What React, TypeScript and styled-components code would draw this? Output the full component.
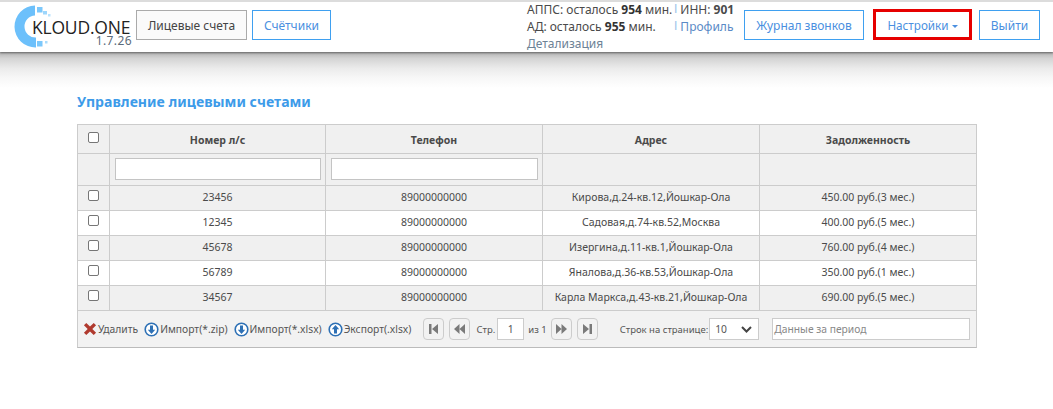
import React from "react";
import styled, { createGlobalStyle } from "styled-components";

const Global = createGlobalStyle`
  html, body { margin: 0; padding: 0; background: #fff; }
  body { font-family: "Noto Sans", "Open Sans", "Liberation Sans", sans-serif; font-size: 12px; color: #4a4a4a; }
`;

const Page = styled.div`
  width: 1053px;
  height: 409px;
  overflow: hidden;
`;

const Header = styled.header`
  height: 52px;
  box-sizing: border-box;
  border-top: 2px solid #dcdcdc;
  background: #fff;
  display: flex;
  align-items: flex-start;
  padding-left: 14px;
  box-shadow: 0 1px 2px rgba(0, 0, 0, 0.45);
  position: relative;
`;

const Shade = styled.div`
  height: 36px;
  background: linear-gradient(to bottom, #b2b2b2 0, #d4d4d4 18%, #ebebeb 45%, #f7f7f7 72%, #fff 100%);
`;

const LogoBox = styled.div`
  width: 118px;
  height: 46px;
  flex: none;
  position: relative;
  margin-top: 3px;
`;

const LogoName = styled.span`
  position: absolute;
  left: 18px;
  top: 14px;
  font-family: "Open Sans", sans-serif;
  font-size: 17.5px;
  line-height: 16px;
  color: #222;
  letter-spacing: -0.2px;
`;

const LogoVersion = styled.span`
  position: absolute;
  right: 0;
  top: 31px;
  font-size: 12px;
  line-height: 10px;
  color: #5b6b7a;
  letter-spacing: 0.4px;
`;

const Button = styled.button<{ $active?: boolean; $width: number }>`
  box-sizing: border-box;
  height: 30px;
  width: ${(p) => p.$width}px;
  flex: none;
  padding: 0;
  font: inherit;
  font-size: 12px;
  background: ${(p) => (p.$active ? "#fafafa" : "#fff")};
  color: ${(p) => (p.$active ? "#444" : "#4a8fe0")};
  border: 1px solid ${(p) => (p.$active ? "#aaa" : "#3fa0f0")};
`;

const NavGroup = styled.div`
  display: flex;
  gap: 5px;
  margin: 8px 0 0 4px;
`;

const Info = styled.div`
  width: 217px;
  margin-left: 196px;
  flex: none;
  font-size: 12px;
  line-height: 17px;
  margin-top: -1px;
  white-space: nowrap;
`;

const InfoRow = styled.div`
  display: flex;
`;

const InfoLeft = styled.span`
  width: 147px;
  flex: none;
  & b { color: #333; }
`;

const InfoLink = styled.span<{ $muted?: boolean }>`
  color: ${(p) => (p.$muted ? "#6d8296" : "#5a8ac6")};
`;

const Sep = styled.span`
  font-family: "Liberation Sans", sans-serif;
  color: #9cc4ea;
  margin-right: 3px;
`;

const RightGroup = styled.div`
  display: flex;
  align-items: flex-start;
  margin: 8px 0 0 0;
`;

const Highlight = styled.div`
  box-sizing: border-box;
  width: 99px;
  height: 31px;
  margin: -1px 7px 0 9px;
  border: 3px solid #e60000;
  font-size: 11.7px;
  color: #4a8fe0;
  display: flex;
  align-items: center;
  justify-content: center;
  gap: 3px;
`;

const Caret = styled.i`
  display: inline-block;
  margin-top: 3px;
  border-left: 3.5px solid transparent;
  border-right: 3.5px solid transparent;
  border-top: 3.5px solid #4a8fe0;
`;

const Content = styled.main`
  padding: 4px 77px 0;
`;

const Title = styled.h1`
  margin: 0 0 12px;
  font-size: 14.1px;
  line-height: 20px;
  font-weight: 700;
  color: #3d9be9;
`;

const Grid = styled.table`
  width: 899px;
  border-collapse: collapse;
  table-layout: fixed;
  font-size: 10.5px;
  & td, & th { border: 1px solid #ccc; padding: 0; text-align: center; }
`;

const HeadRow = styled.tr`
  height: 29px;
  background: #f0f0f0;
  & th { padding-top: 1px; font-size: 10.5px; font-weight: 700; color: #4a4a4a; }
`;

const FilterRow = styled.tr`
  height: 32px;
  background: #f0f0f0;
`;

const BodyRow = styled.tr<{ $odd: boolean }>`
  height: 25px;
  background: ${(p) => (p.$odd ? "#f0f0f0" : "#fff")};
  & td { padding-bottom: 2px; }
`;

const Check = styled.span`
  display: block;
  box-sizing: border-box;
  width: 11px;
  height: 11px;
  margin: -4px auto 0;
  background: #fff;
  border: 1px solid #767676;
  border-radius: 2px;
`;

const FilterInput = styled.input<{ $width: number }>`
  display: block;
  box-sizing: border-box;
  width: ${(p) => p.$width}px;
  height: 22px;
  margin: 0 0 2px 5px;
  background: #fff;
  border: 1px solid #c4c4c4;
  outline: none;
`;

const Footer = styled.div`
  box-sizing: border-box;
  width: 900px;
  height: 37px;
  background: #f2f2f2;
  border: 1px solid #ccc;
  border-top: none;
  border-bottom: 1px solid #bbb;
  display: flex;
  align-items: center;
  padding-left: 5px;
  font-size: 10.3px;
  color: #555;
  white-space: nowrap;
`;

const Action = styled.span`
  display: inline-flex;
  align-items: center;
  gap: 1px;
  margin-right: 6px;
`;

const PagerBtn = styled.span<{ $left?: number }>`
  box-sizing: border-box;
  width: 21px;
  height: 22px;
  flex: none;
  margin-left: ${(p) => p.$left ?? 5}px;
  border: 1px solid #ccc;
  border-radius: 4px;
  background: #f2f2f2;
  display: flex;
  align-items: center;
  justify-content: center;
`;

const PageInput = styled.span`
  box-sizing: border-box;
  width: 27px;
  height: 22px;
  margin-left: 2px;
  background: #fff;
  border: 1px solid #ccc;
  display: flex;
  align-items: center;
  justify-content: center;
`;

const Small = styled.span<{ $left: number }>`
  font-size: 9.5px;
  margin-left: ${(p) => p.$left}px;
`;

const PerPage = styled.span`
  box-sizing: border-box;
  width: 50px;
  height: 22px;
  margin-left: 1px;
  background: #fff;
  border: 1px solid #ccc;
  display: flex;
  align-items: center;
  justify-content: space-between;
  padding: 0 6px 0 5px;
`;

const Period = styled.span`
  box-sizing: border-box;
  width: 198px;
  height: 22px;
  margin-left: 13px;
  background: #fff;
  border: 1px solid #ccc;
  display: flex;
  align-items: center;
  padding-left: 1px;
  color: #888;
`;

const Logo = () => (
  <svg width="40" height="46" viewBox="0 0 40 46">
    <path d="M21 .5 A21 21 0 0 0 22 42.5 V32.5 A11 11 0 0 1 21 10.5 Z" fill="#6cc0fb" />
    <rect x="23" y="2" width="5.5" height="5.5" fill="#7cc8fb" />
    <rect x="29" y="6" width="4" height="3.5" fill="#9dd6fc" />
    <rect x="34" y="9" width="2.5" height="2.5" fill="#b9e2fd" />
    <rect x="23" y="36" width="5.5" height="5.5" fill="#7cc8fb" />
    <rect x="31" y="36" width="2.5" height="2.5" fill="#a9dbfc" />
  </svg>
);

const RoundArrow = ({ up }: { up?: boolean }) => (
  <svg width="15" height="15" viewBox="0 0 15 15">
    <circle cx="7.5" cy="7.5" r="6.3" fill="#fff" stroke="#2d70b5" strokeWidth="1.6" />
    <path d={up ? "M7.5 3 L11.2 7.2 H9 V11.5 H6 V7.2 H3.8 Z" : "M7.5 12 L11.2 7.8 H9 V3.5 H6 V7.8 H3.8 Z"} fill="#2d70b5" />
  </svg>
);

const Cross = () => (
  <svg width="14" height="14" viewBox="0 0 15 14">
    <path d="M1 3 L3.5 .6 L7.5 4.4 L11.5 .6 L14 3 L10 7 L14 11 L11.5 13.4 L7.5 9.6 L3.5 13.4 L1 11 L5 7 Z" fill="#b03a2e" />
  </svg>
);

const PagerIcon = ({ d }: { d: string }) => (
  <svg width="13" height="12" viewBox="0 0 13 12">
    <path d={d} fill="#7a7a7a" />
  </svg>
);

const rows = [
  ["23456", "Кирова,д.24-кв.12,Йошкар-Ола", "450.00 руб.(3 мес.)"],
  ["12345", "Садовая,д.74-кв.52,Москва", "400.00 руб.(5 мес.)"],
  ["45678", "Изергина,д.11-кв.1,Йошкар-Ола", "760.00 руб.(4 мес.)"],
  ["56789", "Яналова,д.36-кв.53,Йошкар-Ола", "350.00 руб.(1 мес.)"],
  ["34567", "Карла Маркса,д.43-кв.21,Йошкар-Ола", "690.00 руб.(5 мес.)"],
];

export default function App() {
  return (
    <Page>
      <Global />
      <Header>
        <LogoBox>
          <Logo />
          <LogoName>KLOUD.ONE</LogoName>
          <LogoVersion>1.7.26</LogoVersion>
        </LogoBox>
        <NavGroup>
          <Button $active $width={111}>Лицевые счета</Button>
          <Button $width={79}>Счётчики</Button>
        </NavGroup>
        <Info>
          <InfoRow>
            <InfoLeft>АППС: осталось <b>954</b> мин.</InfoLeft>
            <Sep>I</Sep>
            <span>ИНН: <b>901</b></span>
          </InfoRow>
          <InfoRow>
            <InfoLeft>АД: осталось <b>955</b> мин.</InfoLeft>
            <Sep>I</Sep>
            <InfoLink>Профиль</InfoLink>
          </InfoRow>
          <InfoRow>
            <InfoLink $muted>Детализация</InfoLink>
          </InfoRow>
        </Info>
        <RightGroup>
          <Button $width={120}>Журнал звонков</Button>
          <Highlight>Настройки<Caret /></Highlight>
          <Button $width={61}>Выйти</Button>
        </RightGroup>
      </Header>
      <Shade />
      <Content>
        <Title>Управление лицевыми счетами</Title>
        <Grid>
          <colgroup>
            <col width="32" />
            <col width="216" />
            <col width="217" />
            <col width="217" />
            <col width="217" />
          </colgroup>
          <thead>
            <HeadRow>
              <th><Check /></th>
              <th>Номер л/с</th>
              <th>Телефон</th>
              <th>Адрес</th>
              <th>Задолженность</th>
            </HeadRow>
            <FilterRow>
              <td />
              <td><FilterInput $width={206} /></td>
              <td><FilterInput $width={207} /></td>
              <td />
              <td />
            </FilterRow>
          </thead>
          <tbody>
            {rows.map((r, i) => (
              <BodyRow key={r[0]} $odd={i % 2 === 0}>
                <td><Check /></td>
                <td>{r[0]}</td>
                <td>89000000000</td>
                <td>{r[1]}</td>
                <td>{r[2]}</td>
              </BodyRow>
            ))}
          </tbody>
        </Grid>
        <Footer>
          <Action><Cross />Удалить</Action>
          <Action><RoundArrow />Импорт(*.zip)</Action>
          <Action><RoundArrow />Импорт(*.xlsx)</Action>
          <Action><RoundArrow up />Экспорт(.xlsx)</Action>
          <PagerBtn $left={6}><PagerIcon d="M2 1h2.5v10H2z M11 1v10L5 6z" /></PagerBtn>
          <PagerBtn><PagerIcon d="M6.5 1v10L1 6z M12 1v10L6.5 6z" /></PagerBtn>
          <Small $left={6}>Стр.</Small>
          <PageInput>1</PageInput>
          <Small $left={4}>из 1</Small>
          <PagerBtn $left={4}><PagerIcon d="M1 1v10l5.5-5z M6.5 1v10L12 6z" /></PagerBtn>
          <PagerBtn><PagerIcon d="M2 1v10l6-5z M8.5 1H11v10H8.5z" /></PagerBtn>
          <Small $left={22}>Строк на странице:</Small>
          <PerPage>
            10
            <svg width="11" height="7" viewBox="0 0 11 7"><path d="M1 1 L5.5 5.5 L10 1" fill="none" stroke="#444" strokeWidth="2" /></svg>
          </PerPage>
          <Period>Данные за период</Period>
        </Footer>
      </Content>
    </Page>
  );
}
